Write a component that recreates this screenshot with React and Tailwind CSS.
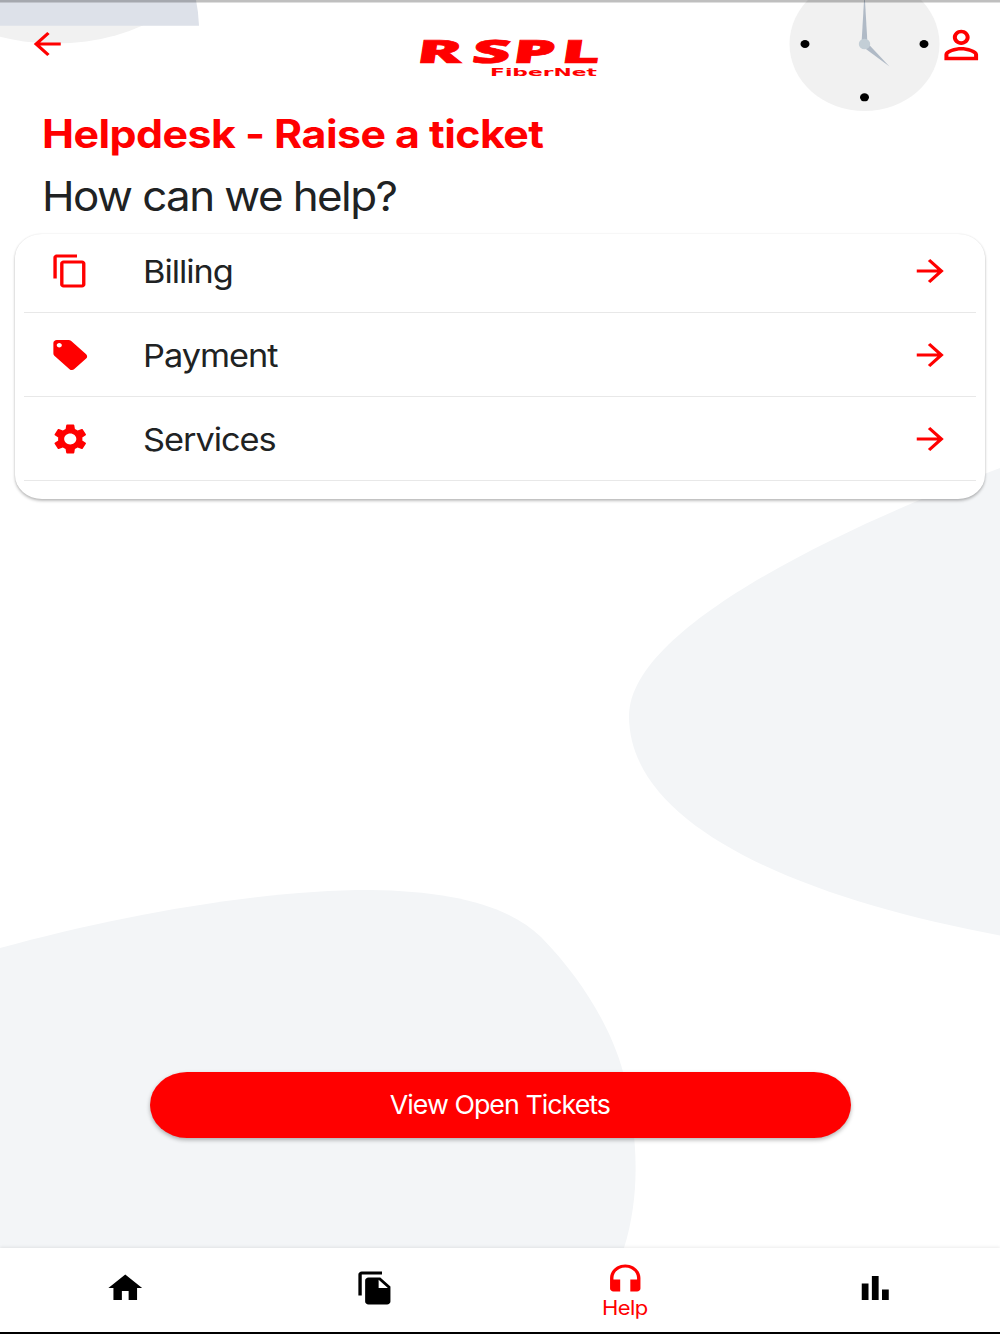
import React from "react";

const paths = {
  back: "M20 11H7.83l5.59-5.59L12 4l-8 8 8 8 1.41-1.41L7.83 13H20v-2z",
  forward: "M12 4l-1.41 1.41L16.17 11H4v2h12.17l-5.58 5.59L12 20l8-8z",
  person:
    "M12 5.9c1.16 0 2.1.94 2.1 2.1s-.94 2.1-2.1 2.1S9.9 9.16 9.9 8s.94-2.1 2.1-2.1m0 9c2.97 0 6.1 1.46 6.1 2.1v1.1H5.9V17c0-.64 3.13-2.1 6.1-2.1M12 4C9.79 4 8 5.79 8 8s1.79 4 4 4 4-1.79 4-4-1.79-4-4-4zm0 9c-2.67 0-8 1.34-8 4v3h16v-3c0-2.66-5.33-4-8-4z",
  copy: "M16 1H4c-1.1 0-2 .9-2 2v14h2V3h12V1zm3 4H8c-1.1 0-2 .9-2 2v14c0 1.1.9 2 2 2h11c1.1 0 2-.9 2-2V7c0-1.1-.9-2-2-2zm0 16H8V7h11v14z",
  tag: "M21.41 11.58l-9-9C12.05 2.22 11.55 2 11 2H4c-1.1 0-2 .9-2 2v7c0 .55.22 1.05.59 1.42l9 9c.36.36.86.58 1.41.58.55 0 1.05-.22 1.41-.59l7-7c.37-.36.59-.86.59-1.41 0-.55-.23-1.06-.59-1.42zM5.5 7C4.67 7 4 6.33 4 5.5S4.67 4 5.5 4 7 4.67 7 5.5 6.33 7 5.5 7z",
  settings:
    "M19.14 12.94c.04-.3.06-.61.06-.94 0-.32-.02-.64-.07-.94l2.03-1.58c.18-.14.23-.41.12-.61l-1.92-3.32c-.12-.22-.37-.29-.59-.22l-2.39.96c-.5-.38-1.03-.7-1.62-.94l-.36-2.54c-.04-.24-.24-.41-.48-.41h-3.84c-.24 0-.43.17-.47.41l-.36 2.54c-.59.24-1.13.57-1.62.94l-2.39-.96c-.22-.08-.47 0-.59.22L2.74 8.87c-.12.21-.08.47.12.61l2.03 1.58c-.05.3-.09.63-.09.94s.02.64.07.94l-2.03 1.58c-.18.14-.23.41-.12.61l1.92 3.32c.12.22.37.29.59.22l2.39-.96c.5.38 1.03.7 1.62.94l.36 2.54c.05.24.24.41.48.41h3.84c.24 0 .44-.17.47-.41l.36-2.54c.59-.24 1.13-.56 1.62-.94l2.39.96c.22.08.47 0 .59-.22l1.92-3.32c.12-.22.07-.47-.12-.61l-2.01-1.58zM12 15.6c-1.98 0-3.6-1.62-3.6-3.6s1.62-3.6 3.6-3.6 3.6 1.62 3.6 3.6-1.62 3.6-3.6 3.6z",
  home: "M10 20v-6h4v6h5v-8h3L12 3 2 12h3v8z",
  files:
    "M16 1H4c-1.1 0-2 .9-2 2v14h2V3h12V1zm-1 4l6 6v10c0 1.1-.9 2-2 2H7.99C6.89 23 6 22.1 6 21l.01-14c0-1.1.89-2 1.99-2h7zm-1 7h5.5L14 6.5V12z",
  headphones:
    "M12 3c-4.97 0-9 4.03-9 9v7c0 1.1.9 2 2 2h4v-8H5v-1c0-3.87 3.13-7 7-7s7 3.13 7 7v1h-4v8h4c1.1 0 2-.9 2-2v-7c0-4.97-4.03-9-9-9z",
  chart: "M4 9h4v11H4zM16 13h4v7h-4zM10 4h4v16h-4z",
};

const Icon = ({ name, className = "w-[40.5px] h-9" }) => (
  <svg
    viewBox="0 0 24 24"
    preserveAspectRatio="none"
    fill="currentColor"
    className={`shrink-0 ${className}`}
  >
    <path d={paths[name]} />
  </svg>
);

const topics = [
  { icon: "copy", label: "Billing" },
  { icon: "tag", label: "Payment" },
  { icon: "settings", label: "Services" },
];

const tabs = [
  { icon: "home" },
  { icon: "files" },
  { icon: "headphones", label: "Help" },
  { icon: "chart" },
];

const Background = () => (
  <svg viewBox="0 0 1000 1334" className="absolute inset-0 w-full h-full">
    <ellipse cx="55" cy="-66.5" rx="160" ry="110" fill="#f1f1f1" />
    <path d="M0 0H196Q198.500 12 199 25.700H0Z" fill="#dde1e9" />
    <ellipse cx="864.500" cy="44" rx="75" ry="67" fill="#f1f1f1" />
    <path d="M864.500 -8L861.500 44H867.500Z" fill="#b0bac6" />
    <path d="M862.500 46.500L866.500 42L889.500 66.500Z" fill="#b0bac6" />
    <ellipse cx="864.500" cy="44" rx="5.700" ry="5.200" fill="#c3ced6" />
    <ellipse cx="805" cy="44" rx="4.500" ry="4" />
    <ellipse cx="924" cy="44" rx="4.500" ry="4" />
    <ellipse cx="864.500" cy="97.300" rx="4.500" ry="4" />
    <path
      d="M1000 468C880 513 629 620 629 716C629 830 810 900 1000 935.500Z"
      fill="#f3f5f7"
    />
    <path
      d="M0 948C120 915 260 890 370 890C450 891 508 905 541 937C583 980 612 1030 623 1072C637 1130 642 1190 624 1248H0Z"
      fill="#f3f5f7"
    />
    <rect width="1000" height="2.500" fill="#000" fillOpacity="0.25" />
  </svg>
);

const Logo = () => (
  <svg viewBox="0 -12 190 68" className="w-[190px] h-[68px]" fill="#ff0000">
    <text
      x="1.200 27.400 46.900 70"
      y="0"
      transform="translate(0 29) skewX(-9) scale(2.100 1)"
      fontSize="32"
      fontWeight="800"
      fontFamily="'Open Sans', sans-serif"
      stroke="#ff0000"
      strokeWidth="0.600"
    >
      RSPL
    </text>
    <text
      x="77"
      y="42"
      fontSize="10"
      fontWeight="700"
      fontFamily="'DejaVu Sans', sans-serif"
      textLength="107"
      lengthAdjust="spacingAndGlyphs"
    >
      FiberNet
    </text>
  </svg>
);

const App = () => {
  return (
    <main className="relative w-[1000px] h-[1334px] overflow-hidden bg-white font-['Inter',sans-serif] text-[#202223]">
      <Background />
      <div className="relative flex flex-col h-full">
        <header className="flex items-center justify-between h-[88px] pl-[27px] pr-[14px] text-[#ff0000]">
          <Icon name="back" />
          <div className="pt-6 -mr-[12px] h-[88px] flex items-center">
            <Logo />
          </div>
          <Icon name="person" className="w-[50.500px] h-[46px] mt-px" />
        </header>

        <h1 className="mt-[22px] pl-[42px] h-12 leading-[48px] text-[39px] font-bold tracking-[-0.5px] text-[#ff0000] whitespace-nowrap">
          <span className="inline-block origin-left scale-x-[1.1]">
            Helpdesk - Raise a ticket
          </span>
        </h1>
        <h2 className="mt-[14px] pl-[41.500px] h-12 leading-[48px] text-[41px] tracking-[-1.450px] whitespace-nowrap">
          <span className="inline-block origin-left scale-x-[1.07]">
            How can we help?
          </span>
        </h2>

        <section className="mt-[14px] mx-[15px] h-[265px] rounded-[27px/24px] bg-white px-[9px] shadow-[0_2px_3px_rgba(0,0,0,0.25),0_0_2px_rgba(0,0,0,0.1)]">
          <ul className="-mt-[5px]">
            {topics.map(({ icon, label }) => (
              <li
                key={label}
                className="flex items-center h-[84px] pl-[26px] pr-[26px] border-b border-[#e8e8e8]"
              >
                <span className="text-[#ff0000]">
                  <Icon name={icon} />
                </span>
                <span className="ml-[52.500px] mt-[3px] flex-1 text-[31.500px] tracking-[-0.950px]">
                  <span className="inline-block origin-left scale-x-[1.09]">
                    {label}
                  </span>
                </span>
                <span className="text-[#ff0000]">
                  <Icon name="forward" />
                </span>
              </li>
            ))}
          </ul>
        </section>

        <button className="mt-auto mb-[110px] mx-auto w-[701px] h-[66px] pb-[2px] rounded-[37px/33px] bg-[#ff0000] text-white text-[26px] tracking-[-0.950px] shadow-[0_2px_4px_rgba(0,0,0,0.3)]">
          <span className="inline-block scale-x-[1.03]">View Open Tickets</span>
        </button>

        <nav className="flex h-[86px] bg-white border-b-2 border-black shadow-[0_-1px_3px_rgba(0,0,0,0.08)]">
          {tabs.map(({ icon, label }) => (
            <div
              key={icon}
              className={`flex-1 flex flex-col items-center ${
                label ? "pt-[12px] text-[#ff0000]" : "pt-[22px] text-black"
              }`}
            >
              <Icon name={icon} />
              {label && (
                <span className="text-[20px] leading-6 tracking-[-0.500px] inline-block scale-x-[1.1]">
                  {label}
                </span>
              )}
            </div>
          ))}
        </nav>
      </div>
    </main>
  );
};

export default App;
